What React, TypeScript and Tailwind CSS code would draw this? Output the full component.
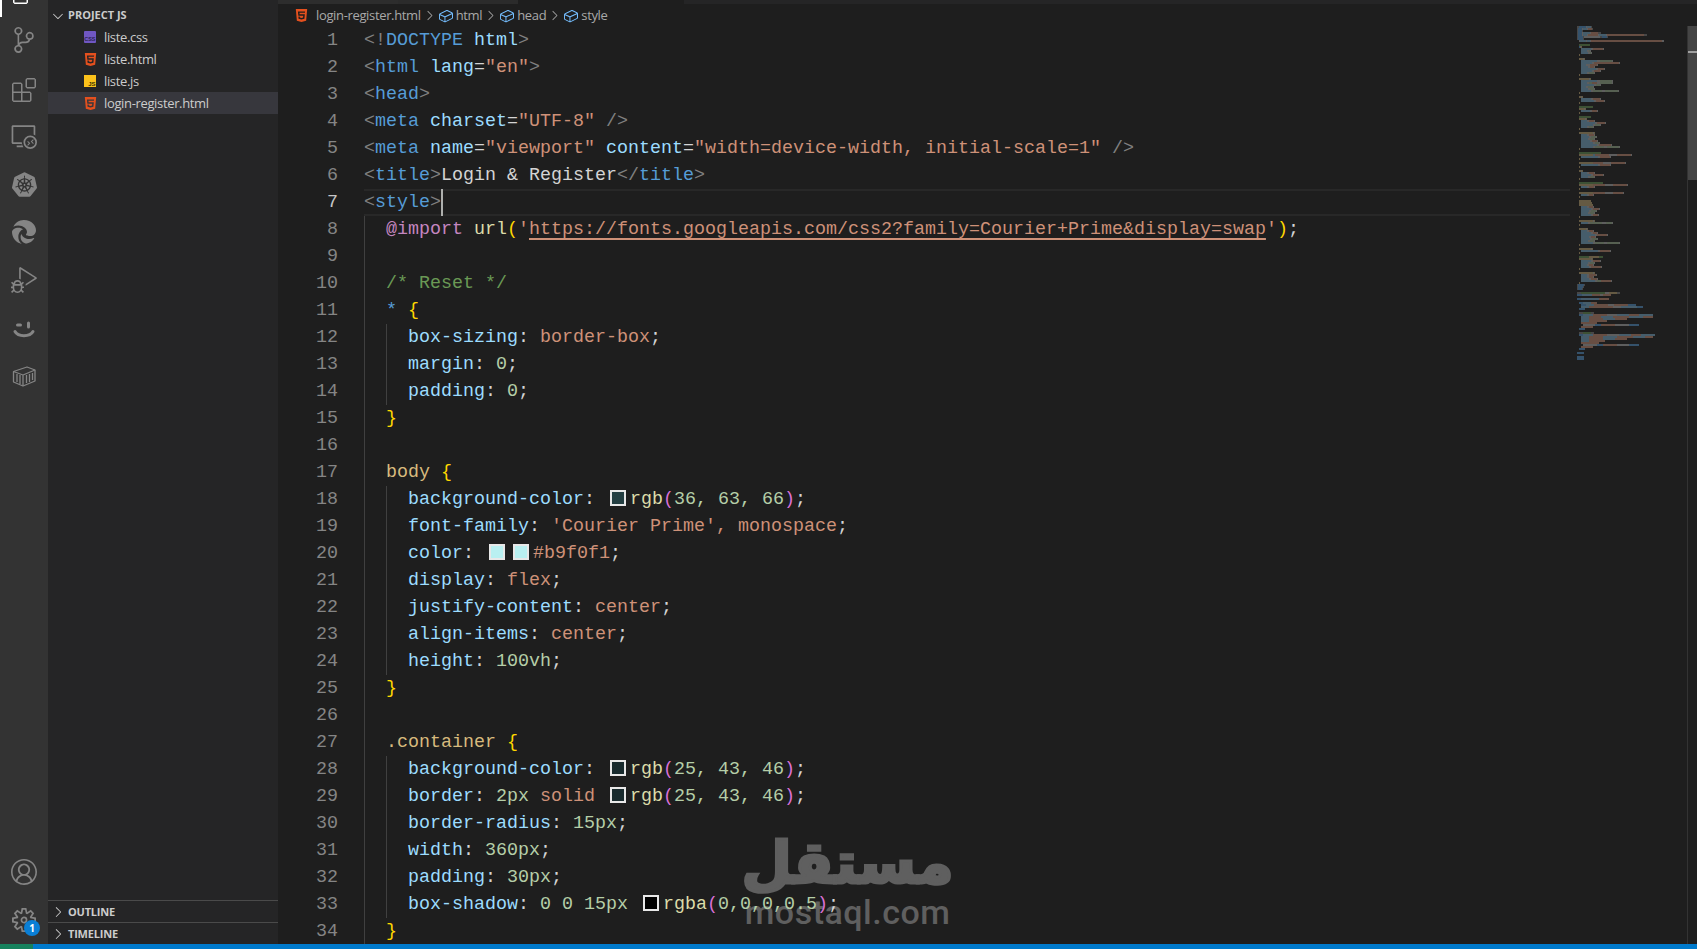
import React from "react";
import { SiKubernetes, SiHtml5 } from "react-icons/si";
import { FaEdge } from "react-icons/fa6";
import {
  VscFiles, VscSourceControl, VscExtensions, VscRemoteExplorer, VscDebugAlt, VscAccount,
  VscSettingsGear, VscChevronDown, VscChevronRight, VscSymbolField,
} from "react-icons/vsc";

const B = "text-[#808080]";
const T = "text-[#569cd6]";
const A = "text-[#9cdcfe]";
const S = "text-[#ce9178]";
const W = "text-[#d4d4d4]";
const K = "text-[#c586c0]";
const F = "text-[#dcdcaa]";
const G = "text-[#6a9955]";
const Y = "text-[#d7ba7d]";
const N = "text-[#b5cea8]";
const O = "text-[#ffd700]";
const M = "text-[#da70d6]";

type Tok = [string, string] | { sw: string };
type Line = { g: number; t: Tok[]; hl?: boolean };

const sw = (c: string): Tok => ({ sw: c });
const prop = (name: string, ...rest: Tok[]): Line => ({ g: 2, t: [[name, A], [": ", W], ...rest, [";", W]] });
const rgb = (c: string, args: string): Tok[] => [sw(c), ["rgb", F], ["(", M], [args, N], [")", M]];
const tag = (name: string): Tok[] => [["<", B], [name, T], [">", B]];

const LINES: Line[] = [
  { g: 0, t: [["<!", B], ["DOCTYPE", T], [" ", W], ["html", A], [">", B]] },
  { g: 0, t: [["<", B], ["html", T], [" ", W], ["lang", A], ["=", W], ['"en"', S], [">", B]] },
  { g: 0, t: tag("head") },
  { g: 0, t: [["<", B], ["meta", T], [" ", W], ["charset", A], ["=", W], ['"UTF-8"', S], [" />", B]] },
  { g: 0, t: [["<", B], ["meta", T], [" ", W], ["name", A], ["=", W], ['"viewport"', S], [" ", W], ["content", A], ["=", W], ['"width=device-width, initial-scale=1"', S], [" />", B]] },
  { g: 0, t: [...tag("title"), ["Login & Register", W], ["</", B], ["title", T], [">", B]] },
  { g: 0, t: tag("style"), hl: true },
  { g: 1, t: [["@import", K], [" ", W], ["url", F], ["(", O], ["'", S], ["URL", S], ["'", S], [")", O], [";", W]] },
  { g: 1, t: [] },
  { g: 1, t: [["/* Reset */", G]] },
  { g: 1, t: [["*", T], [" ", W], ["{", O]] },
  prop("box-sizing", ["border-box", S]),
  prop("margin", ["0", N]),
  prop("padding", ["0", N]),
  { g: 1, t: [["}", O]] },
  { g: 1, t: [] },
  { g: 1, t: [["body", Y], [" ", W], ["{", O]] },
  prop("background-color", ...rgb("#243f42", "36, 63, 66")),
  prop("font-family", ["'Courier Prime', monospace", S]),
  prop("color", sw("#b9f0f1"), sw("#b9f0f1"), ["#b9f0f1", S]),
  prop("display", ["flex", S]),
  prop("justify-content", ["center", S]),
  prop("align-items", ["center", S]),
  prop("height", ["100vh", N]),
  { g: 1, t: [["}", O]] },
  { g: 1, t: [] },
  { g: 1, t: [[".container", Y], [" ", W], ["{", O]] },
  prop("background-color", ...rgb("#192b2e", "25, 43, 46")),
  prop("border", ["2px", N], [" ", W], ["solid", S], [" ", W], ...rgb("#192b2e", "25, 43, 46")),
  prop("border-radius", ["15px", N]),
  prop("width", ["360px", N]),
  prop("padding", ["30px", N]),
  prop("box-shadow", ["0 0 15px", N], [" ", W], sw("#000000"), ["rgba", F], ["(", M], ["0,0,0,0.5", N], [")", M]),
  { g: 1, t: [["}", O]] },
];

function Token({ tok }: { tok: Tok }) {
  if (!Array.isArray(tok)) {
    return (
      <span className="inline-flex h-[27px] w-[24px] items-center justify-start pb-[4px] pl-[4px] align-top">
        <span className="block h-[16px] w-[16px] border-2 border-[#e8e8e8]" style={{ backgroundColor: tok.sw }} />
      </span>
    );
  }
  if (tok[0] === "URL") {
    return <span className={`${S} underline decoration-[1.5px] underline-offset-[4px]`}>https://fonts.googleapis.com/css2?family=Courier+Prime&amp;display=swap</span>;
  }
  return <span className={tok[1]}>{tok[0]}</span>;
}

function CodeRow({ line, n }: { line: Line; n: number }) {
  return (
    <div className="flex h-[27px]">
      <span className={`w-[60px] shrink-0 text-right ${line.hl ? "text-[#c6c6c6]" : "text-[#858585]"}`}>{n}</span>
      <span className="w-[26px] shrink-0" />
      <div className={`flex h-[27px] min-w-0 flex-1 items-center ${line.hl ? "border-y-2 border-[#282828]" : ""}`}>
        {line.g >= 1 && <span className="h-[27px] w-[22px] shrink-0 border-l border-[#404040]" />}
        {line.g >= 2 && <span className="h-[27px] w-[22px] shrink-0 border-l border-[#404040]" />}
        <span className="whitespace-pre">
          {line.t.map((tok, i) => <Token key={i} tok={tok} />)}
        </span>
        {line.hl && <span className="h-[27px] w-[2px] shrink-0 bg-[#aeafad]" />}
      </div>
    </div>
  );
}

/* Minimap: each row is "indent token token…", token = colour letter + length */
const MINI_COLORS: Record<string, string> = {
  b: "#569cd6", a: "#7fb6d6", o: "#ce9178", w: "#b8b8b8", g: "#6a9955", y: "#c9ad78", n: "#a5bd98", d: "#808080",
};
const MINI: string[] = [
  "0 d2b7w1a4d1", "0 d1b4w1a4w1o4d1", "0 d1b4d1", "0 d1b4w1a7w1o7d3", "0 d1b4w1a4w1o10w1a7w1o37d3", "0 d1b5d1w16d2b5d1", "0 d1b5d1",
  "1 w1a6w1a3w1o71w2", "", "1 g11", "1 b1w1y1", "2 a10w2o10w1", "2 a6w2n1w1", "2 a7w2n1w1", "1 y1", "",
  "1 y4w1y1", "2 a16w3n12w1", "2 a11w2o25w1", "2 a5w2w2o7w1", "2 a7w2o4w1", "2 a15w2o6w1", "2 a11w2o6w1", "2 a6w2n5w1", "1 y1", "",
  "1 y10w1y1", "2 a16w3n12w1", "2 a6w2n3o5w3n12w1", "2 a13w2n4w1", "2 a5w2n5w1", "2 a7w2n4w1", "2 a10w2n9w3n13w1", "1 y1", "",
  "1 y2w1y1", "2 a10w2o7w1", "2 a13w2o8w1", "1 y1", "",
  "1 g14", "1 y5w1y1", "2 a9w2o5w1", "1 y1", "",
  "1 g12", "1 y6w1y1", "2 a6w2o5w1", "2 a14w2o8w1", "2 a12w2n5w1", "2 a6w2n4w1", "1 y1", "",
  "1 y14w1y1", "2 a6w2o5w1", "2 a8w2n5w1", "2 a7w2n4w1", "2 a9w2o5w1", "2 a12w2n4w1", "2 a16w2o12w1", "2 a12w2n9w3n12w1", "1 y1", "",
  "1 g22", "1 y14a2o14w8o14w1", "2 a17w2o10w1", "1 y1", "",
  "1 y14o10w8o14w1", "2 a17w2o10w1", "1 y1", "",
  "1 y2w1y1", "2 a6w2o5w1", "2 a10w2o10w1", "2 a7w2n4w1", "1 y1", "",
  "1 g24", "1 y14o12w8o14w1", "2 a6w2o5w1", "1 y1", "",
  "1 y14o12w8o10w1", "2 a6w2o4w1", "1 y1", "",
  "1 y12", "1 y13", "1 y14", "2 a6w2o4w1", "2 a10w2o6w1", "2 a8w2n5w1", "2 a7w2n4w1", "2 a10w2o5w1", "1 y1", "",
  "1 y14w1y1", "2 a7w2n12w4n6w1", "1 y1", "",
  "1 y7w1y1", "2 a6w2o4w1", "2 a10w2o4w1", "2 a14w2o10w1", "2 a8w2o4w1", "2 a9w2n5w1", "2 a7w2n4w1", "2 a12w2n9w3n12w1", "1 y1", "",
  "1 y12w1y1", "2 a17w2o10w1", "1 y1", "",
  "1 g10y10g4", "1 y12w1y1", "2 a10w2o7w1", "2 a7w2n4w1", "2 a6w2o4w1", "2 a8w2o10w1", "1 y1", "",
  "1 y14w1y1", "2 a6w2o7w1", "2 a6w2o4w1", "2 a8w2o6w1", "2 a14w2n4o10w1", "1 y1",
  "0 d1b6d1", "0 d1b5d1", "0 d1b4d1", "",
  "0 d4g24w4y8d3", "0 b5a10o8w3o8", "",
  "0 b4a18o10", "",
  "1 b4a8o6", "2 b5a8o14w6o14b8", "2 a8o10o14w8a16b6", "1 b6", "",
  "1 d4g8d3", "1 b4a10o14w10a12o10a14", "2 a8o12a12o16a14o10", "2 a8o14a12o12", "2 a8o18", "2 o16", "3 w12b6o14w14b10", "2 o12", "1 b6", "",
  "1 d4g8d3", "1 b4a10o14w12a12o10a14", "2 a8o14a14o16a12o8", "2 a8o14a12o12", "2 a8o16", "2 o18", "3 w14b6o14w12b10", "2 o12", "1 b6", "",
  "0 b7", "", "0 b7", "0 b7",
];

function Minimap() {
  const rects: React.ReactNode[] = [];
  MINI.forEach((row, i) => {
    if (!row) return;
    const [ind, toks] = row.split(" ");
    let x = Number(ind) * 2;
    for (const m of toks.matchAll(/([a-z])(\d+)/g)) {
      const len = Number(m[2]);
      rects.push(
        <rect key={`${i}-${x}`} x={x} y={i * 2} width={len} height={2} fill={MINI_COLORS[m[1]]} fillOpacity={0.42} />
      );
      x += len;
    }
  });
  return (
    <svg width="110" height="344" viewBox="0 0 110 344" className="block">
      {rects}
    </svg>
  );
}

function HtmlIcon({ size = 13 }: { size?: number }) {
  return <SiHtml5 size={size} color="#e4501e" />;
}
function CssIcon() {
  return (
    <svg width="12" height="12" viewBox="0 0 12 12">
      <rect width="12" height="12" rx="1" fill="#7057c2" />
      <text x="11.5" y="10" textAnchor="end" fontSize="5.5" fontWeight="700" fontFamily="Liberation Sans, sans-serif" fill="#2c2450">CSS</text>
    </svg>
  );
}
function JsIcon() {
  return (
    <svg width="12" height="12" viewBox="0 0 12 12">
      <rect width="12" height="12" fill="#fcc21b" />
      <text x="11.5" y="10.5" textAnchor="end" fontSize="6" fontWeight="700" fontFamily="Liberation Sans, sans-serif" fill="#3a3000">JS</text>
    </svg>
  );
}

function SmileIcon() {
  return (
    <svg width="24" height="24" viewBox="0 0 24 24" fill="none" stroke="#858585" strokeLinecap="round" strokeWidth="3">
      <path d="M5.5 9h3" />
      <path d="M16.5 7v4" />
      <path d="M3 15.5c3 5.5 15 5.5 18 0" />
    </svg>
  );
}
function ContainerIcon() {
  return (
    <svg width="24" height="24" viewBox="0 0 24 24" fill="none" stroke="#858585" strokeWidth="1.3" strokeLinejoin="round">
      <path d="M1.5 7.5 15 3l8 3v11l-12 5-9.5-4z" />
      <path d="M1.5 7.5 11 11l12-5M11 11v11" />
      <path d="M5 10v8M8 11v9M14.5 11v8M17.5 10v8M20.5 9v7" />
    </svg>
  );
}

function Act({ children, cls = "" }: { children: React.ReactNode; cls?: string }) {
  return <div className={`relative flex h-[48px] w-[48px] shrink-0 items-center justify-center ${cls}`}>{children}</div>;
}

function FileRow({ icon, name, active }: { icon: React.ReactNode; name: string; active?: boolean }) {
  return (
    <div className={`flex h-[22px] items-center pl-[36px] ${active ? "bg-[#37373d]" : ""}`}>
      <span className="flex w-[20px] shrink-0 items-center">{icon}</span>
      <span className="pt-[1px] text-[13px] tracking-[-0.35px] text-[#cccccc]">{name}</span>
    </div>
  );
}

function Crumb({ name }: { name: string }) {
  return (
    <>
      <VscChevronRight size={15} className="mx-[1px] shrink-0 text-[#a0a0a0]" />
      <VscSymbolField size={16} color="#75beff" className="mr-[2px] shrink-0" />
      <span>{name}</span>
    </>
  );
}

export default function App() {
  const c = "#858585";
  return (
    <div className="flex h-[949px] w-[1697px] flex-col overflow-hidden bg-[#1e1e1e] font-['Open_Sans',sans-serif]">
      <div className="flex min-h-0 flex-1">
        {/* Activity bar */}
        <div className="relative flex w-[48px] shrink-0 flex-col overflow-hidden bg-[#333333]">
          <span className="absolute left-0 top-0 h-[17px] w-[2px] bg-white" />
          <Act cls="-mt-[32px]"><VscFiles size={24} color="#ffffff" /></Act>
          <Act><VscSourceControl size={26} color={c} /></Act>
          <Act><span className="pt-[3px]"><VscExtensions size={24} color={c} /></span></Act>
          <Act><VscRemoteExplorer size={26} color={c} /></Act>
          <Act><SiKubernetes size={25} color={c} /></Act>
          <Act><FaEdge size={24} color={c} /></Act>
          <Act><VscDebugAlt size={26} color={c} /></Act>
          <Act><SmileIcon /></Act>
          <Act><ContainerIcon /></Act>
          <div className="mt-auto" />
          <Act><VscAccount size={26} color={c} /></Act>
          <Act>
            <VscSettingsGear size={24} color={c} />
            <span className="absolute left-[24px] top-[24px] flex h-[16px] w-[16px] items-center justify-center rounded-full bg-[#0a7fd6] text-[10px] font-bold text-white">1</span>
          </Act>
        </div>

        {/* Sidebar */}
        <div className="flex w-[230px] shrink-0 flex-col bg-[#252526]">
          <div className="flex h-[26px] items-center pl-[2px] pt-[5px] text-[11px] font-bold text-[#cccccc]">
            <VscChevronDown size={16} />
            <span className="ml-[2px]">PROJECT JS</span>
          </div>
          <FileRow icon={<CssIcon />} name="liste.css" />
          <FileRow icon={<HtmlIcon />} name="liste.html" />
          <FileRow icon={<JsIcon />} name="liste.js" />
          <FileRow icon={<HtmlIcon />} name="login-register.html" active />
          <div className="flex-1" />
          <div className="flex h-[22px] items-center border-t border-[#4a4a4a] pl-[2px] pt-[1px] text-[11px] font-bold tracking-[-0.2px] text-[#cccccc]">
            <VscChevronRight size={16} />
            <span className="ml-[2px]">OUTLINE</span>
          </div>
          <div className="flex h-[22px] items-center border-t border-[#4a4a4a] pl-[2px] pt-[1px] text-[11px] font-bold tracking-[-0.2px] text-[#cccccc]">
            <VscChevronRight size={16} />
            <span className="ml-[2px]">TIMELINE</span>
          </div>
        </div>

        {/* Editor */}
        <div className="relative flex min-w-0 flex-1 flex-col">
          <div className="flex h-[4px] shrink-0 bg-[#252526]">
            <div className="w-[120px] bg-[#2d2d2d]" />
            <div className="w-[120px] bg-[#2b2b2b]" />
            <div className="w-[166px] bg-[#1e1e1e]" />
          </div>
          <div className="flex h-[22px] shrink-0 items-center pl-[17px] pt-[1px] text-[13px] tracking-[-0.35px] text-[#a9a9a9]">
            <span className="mr-[6px] w-[15px]"><HtmlIcon /></span>
            <span>login-register.html</span>
            <Crumb name="html" />
            <Crumb name="head" />
            <Crumb name="style" />
          </div>
          <div className="flex min-h-0 flex-1">
            <div className="relative z-10 w-[1292px] shrink-0 overflow-hidden pt-[1px] font-['Liberation_Mono',monospace] text-[18.33px] leading-[27px]">
              {LINES.map((l, i) => <CodeRow key={i} line={l} n={i + 1} />)}
            </div>
            <div className="w-[117px] shrink-0 pl-[7px]">
              <Minimap />
            </div>
            <div className="relative flex w-[10px] shrink-0 flex-col border-l border-[#333333]">
              <div className="h-[154px] bg-[#454545]" />
              <span className="absolute left-0 top-[25px] h-[2px] w-full bg-[#a0a0a0]" />
            </div>
          </div>
          {/* Watermark */}
          <div className="pointer-events-none absolute left-[467px] top-[833px] flex w-[205px] flex-col items-center text-[#5f5f5f]">
            <span dir="rtl" className="whitespace-nowrap font-['DejaVu_Sans',sans-serif] text-[58px] font-bold leading-[60px] [-webkit-text-stroke:3px_#5f5f5f]">مستقل</span>
            <span className="mt-[1px] whitespace-nowrap font-['Roboto',sans-serif] text-[34px] font-medium leading-[36px] tracking-[0.5px]">mostaql.com</span>
          </div>
        </div>
      </div>

      {/* Status bar */}
      <div className="flex h-[5px] shrink-0">
        <div className="w-[33px] bg-[#16825d]" />
        <div className="flex-1 bg-[#007acc]" />
      </div>
    </div>
  );
}
